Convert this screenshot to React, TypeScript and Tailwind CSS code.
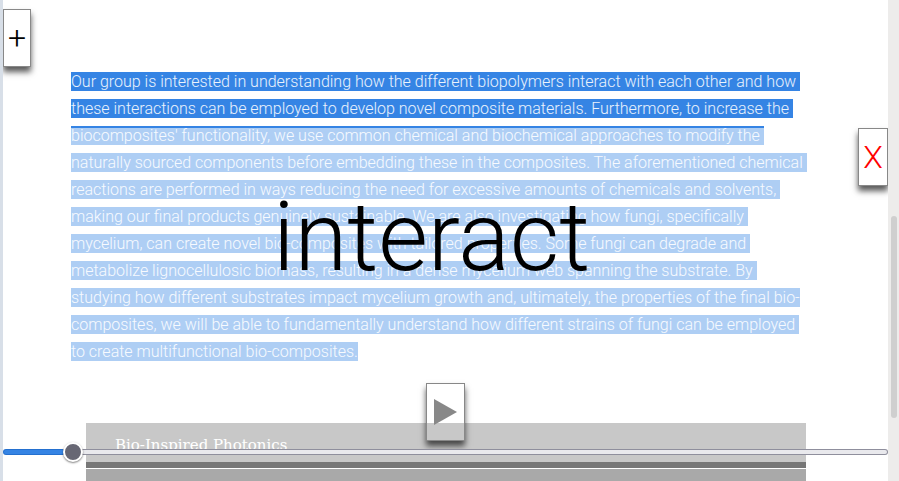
import { useState } from "react";
import type { CSSProperties } from "react";

const lines = [
  "Our group is interested in understanding how the different biopolymers interact with each other and how ",
  "these interactions can be employed to develop novel composite materials. Furthermore, to increase the ",
  "biocomposites' functionality, we use common chemical and biochemical approaches to modify the ",
  "naturally sourced components before embedding these in the composites. The aforementioned chemical ",
  "reactions are performed in ways reducing the need for excessive amounts of chemicals and solvents, ",
  "making our final products genuinely sustainable. We are also investigating how fungi, specifically ",
  "mycelium, can create novel bio-composites with tailored properties. Some fungi can degrade and ",
  "metabolize lignocellulosic biomass, resulting in a dense mycelium web spanning the substrate. By ",
  "studying how different substrates impact mycelium growth and, ultimately, the properties of the final bio-",
  "composites, we will be able to fundamentally understand how different strains of fungi can be employed ",
  "to create multifunctional bio-composites.",
];

const boxButton =
  "flex h-[58px] shrink-0 items-center justify-center border border-[#888888] shadow-[0_5px_6px_rgba(0,0,0,0.65)]";

const sliderMax = 1000;

function Article() {
  return (
    <article className="pt-[68px]">
      <p className="px-[68px] text-base leading-[27px] font-light text-white">
        {lines.map((line) => (
          <span key={line} className="block whitespace-pre">
            <mark className="bg-[#3584e4] text-white/90">{line}</mark>
          </span>
        ))}
      </p>
      <section className="mt-[58px] mr-[82px] ml-[83px]">
        <h2 className="h-[45px] bg-[#777777] px-[29px] pt-[10px] font-['DejaVu_Serif','Liberation_Serif',serif] text-[15px] leading-6 text-white">
          Bio-Inspired Photonics
        </h2>
        <div className="mt-px h-20 bg-[#a9a9a9]" />
      </section>
    </article>
  );
}

function Reader() {
  const [position, setPosition] = useState(68);
  const fill = { "--fill": `${(position / sliderMax) * 100}%` } as CSSProperties;

  return (
    <div className="absolute inset-x-0 top-32 bottom-[19px] flex flex-col items-center bg-white/60">
      <button
        type="button"
        aria-label="Close"
        className={`${boxButton} w-[30px] self-end bg-white text-[32px] font-light text-[#ff0000]`}
      >
        X
      </button>
      <div className="flex-1 pr-7 text-8xl leading-[102px] font-light text-black">interact</div>
      <button type="button" aria-label="Play" className={`${boxButton} w-[39px]`}>
        <svg width="23" height="26" viewBox="0 0 23 26" fill="#888888" aria-hidden="true">
          <path d="M0 0L23 13L0 26Z" />
        </svg>
      </button>
      <input
        type="range"
        aria-label="Position"
        min={0}
        max={sliderMax}
        value={position}
        onChange={(e) => setPosition(Number(e.target.value))}
        style={fill}
        className="mt-px block h-5 w-full shrink-0 appearance-none bg-transparent [&::-webkit-slider-runnable-track]:h-[6px] [&::-webkit-slider-runnable-track]:rounded-full [&::-webkit-slider-runnable-track]:border [&::-webkit-slider-runnable-track]:border-transparent [&::-webkit-slider-runnable-track]:[background:linear-gradient(to_right,#3584e4_var(--fill),#e9e9ed_var(--fill))_padding-box,linear-gradient(to_right,#2470cf_var(--fill),#8f8f9d_var(--fill))_border-box] [&::-webkit-slider-thumb]:-mt-2 [&::-webkit-slider-thumb]:size-5 [&::-webkit-slider-thumb]:appearance-none [&::-webkit-slider-thumb]:rounded-full [&::-webkit-slider-thumb]:border-2 [&::-webkit-slider-thumb]:border-solid [&::-webkit-slider-thumb]:border-white [&::-webkit-slider-thumb]:bg-[#676774] [&::-webkit-slider-thumb]:shadow-[0_1px_2px_rgba(0,0,0,0.5)]"
      />
    </div>
  );
}

export default function App() {
  return (
    <div className="flex h-screen overflow-hidden bg-white font-[Roboto,sans-serif]">
      <div className="w-[3px] shrink-0 bg-[#d8dfe8]" />
      <main className="relative min-w-0 flex-1 overflow-hidden">
        <Article />
        <Reader />
        <button
          type="button"
          aria-label="Add"
          className={`${boxButton} absolute top-[9px] left-0 w-7 bg-white text-[32px] font-light text-black`}
        >
          +
        </button>
      </main>
      <div className="w-[11px] shrink-0 bg-[#edeceb] px-[3px] pt-[216px]">
        <div className="h-[202px] w-[6px] rounded-full bg-[#cfcfcf]" />
      </div>
    </div>
  );
}
